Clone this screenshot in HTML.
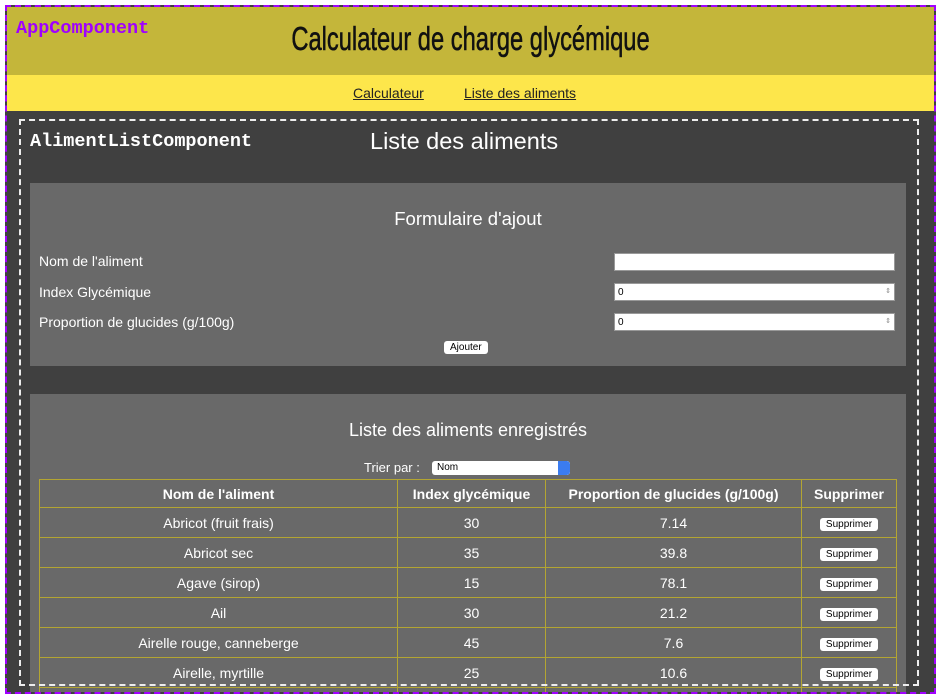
<!DOCTYPE html>
<html style="overflow:hidden"><head><meta charset="utf-8"><style>
*{margin:0;padding:0;box-sizing:border-box}
html,body{width:941px;height:699px;overflow:hidden}
body{background:#fff;position:relative;font-family:"Liberation Sans",sans-serif}
.a{position:absolute}
#app{left:5px;top:5px;width:931px;height:689px;border:2px dashed #a000ff;background:#404040;overflow:hidden}
#hdr{left:0;top:0;width:927px;height:68px;background:#c4b63a}
#nav{left:0;top:68px;width:927px;height:36px;background:#fde64b}
.mono{font-family:"Liberation Mono",monospace;font-weight:bold}
.panel{background:#696969;color:#fff}
.lbl{color:#fff;font-size:14px}
.in{background:#fff;border:1px solid #999;height:18px;font-size:10px;color:#000;padding:3px 3px}
table{border-collapse:collapse;color:#fff;font-size:14px}
td,th{border:1px solid #b3a532;text-align:center;height:30px}
th{height:28px;font-weight:bold}
.btn{display:inline-block;background:#fff;color:#000;font-size:10px;border-radius:3px;padding:1px 6px;line-height:11px}
</style></head><body>
<div id="app" class="a">
 <div id="hdr" class="a">
  <div class="a mono" style="left:9px;top:11px;color:#a000ff;font-size:18.5px">AppComponent</div>
  <div class="a" style="left:0;width:927px;top:16px;text-align:center;font-family:'Liberation Sans Narrow','Liberation Sans',sans-serif;font-size:30px;color:#111;transform:scale(0.79,1.12);-webkit-text-stroke:0.5px #111">Calculateur de charge glycémique</div>
 </div>
 <div id="nav" class="a">
  <span class="a" style="left:346px;top:10px;font-size:14px;text-decoration:underline;color:#222">Calculateur</span>
  <span class="a" style="left:457px;top:10px;font-size:14px;text-decoration:underline;color:#222">Liste des aliments</span>
 </div>
</div>
<div class="a mono" style="left:30px;top:131px;color:#fff;font-size:18.5px">AlimentListComponent</div>
<div class="a" style="left:370px;top:128px;color:#fff;font-size:23.5px">Liste des aliments</div>

<div class="a panel" style="left:30px;top:183px;width:876px;height:183px">
 <div class="a" style="left:0;width:876px;top:25px;text-align:center;font-size:18.5px">Formulaire d'ajout</div>
 <div class="a lbl" style="left:9px;top:70px">Nom de l'aliment</div>
 <div class="a lbl" style="left:9px;top:101px">Index Glycémique</div>
 <div class="a lbl" style="left:9px;top:131px">Proportion de glucides (g/100g)</div>
 <div class="a in" style="left:584px;top:70px;width:281px"></div>
 <div class="a in" style="left:584px;top:100px;width:281px">0<span style="float:right;font-size:7px;color:#888">⇕</span></div>
 <div class="a in" style="left:584px;top:130px;width:281px">0<span style="float:right;font-size:7px;color:#888">⇕</span></div>
 <div class="a btn" style="left:414px;top:158px;padding:1px 6px">Ajouter</div>
</div>

<div class="a panel" style="left:30px;top:394px;width:876px;height:298px;overflow:hidden">
 <div class="a" style="left:0;width:876px;top:26px;text-align:center;font-size:18px">Liste des aliments enregistrés</div>
 <div class="a" style="left:334px;top:66px;font-size:13px">Trier par :</div>
 <div class="a" style="left:402px;top:67px;width:138px;height:14px;background:#fff;border-radius:3px;font-size:10px;color:#000;padding:1px 5px;overflow:hidden">Nom<span class="a" style="right:0;top:0;width:12px;height:14px;background:#3b7cf0;border-radius:0 3px 3px 0"></span></div>
 <table class="a" style="left:9px;top:85px;width:858px">
  <tr><th style="width:358px">Nom de l'aliment</th><th style="width:148px">Index glycémique</th><th style="width:256px">Proportion de glucides (g/100g)</th><th>Supprimer</th></tr>
  <tr><td>Abricot (fruit frais)</td><td>30</td><td>7.14</td><td><span class="btn">Supprimer</span></td></tr>
  <tr><td>Abricot sec</td><td>35</td><td>39.8</td><td><span class="btn">Supprimer</span></td></tr>
  <tr><td>Agave (sirop)</td><td>15</td><td>78.1</td><td><span class="btn">Supprimer</span></td></tr>
  <tr><td>Ail</td><td>30</td><td>21.2</td><td><span class="btn">Supprimer</span></td></tr>
  <tr><td>Airelle rouge, canneberge</td><td>45</td><td>7.6</td><td><span class="btn">Supprimer</span></td></tr>
  <tr><td>Airelle, myrtille</td><td>25</td><td>10.6</td><td><span class="btn">Supprimer</span></td></tr>
  <tr><td>&nbsp;</td><td></td><td></td><td></td></tr>
 </table>
</div>
<div class="a" style="left:19px;top:119px;width:900px;border-top:2px dashed #eee"></div>
<div class="a" style="left:19px;top:684px;width:900px;border-top:2px dashed #eee"></div>
<div class="a" style="left:19px;top:119px;height:567px;border-left:2px dashed #eee"></div>
<div class="a" style="left:917px;top:119px;height:567px;border-left:2px dashed #eee"></div>
<div class="a" style="left:0;top:694px;width:941px;height:6px;background:#fff"></div>
<div class="a" style="left:5px;top:5px;width:931px;height:689px;border:2px dashed #a000ff"></div>
</body></html>
